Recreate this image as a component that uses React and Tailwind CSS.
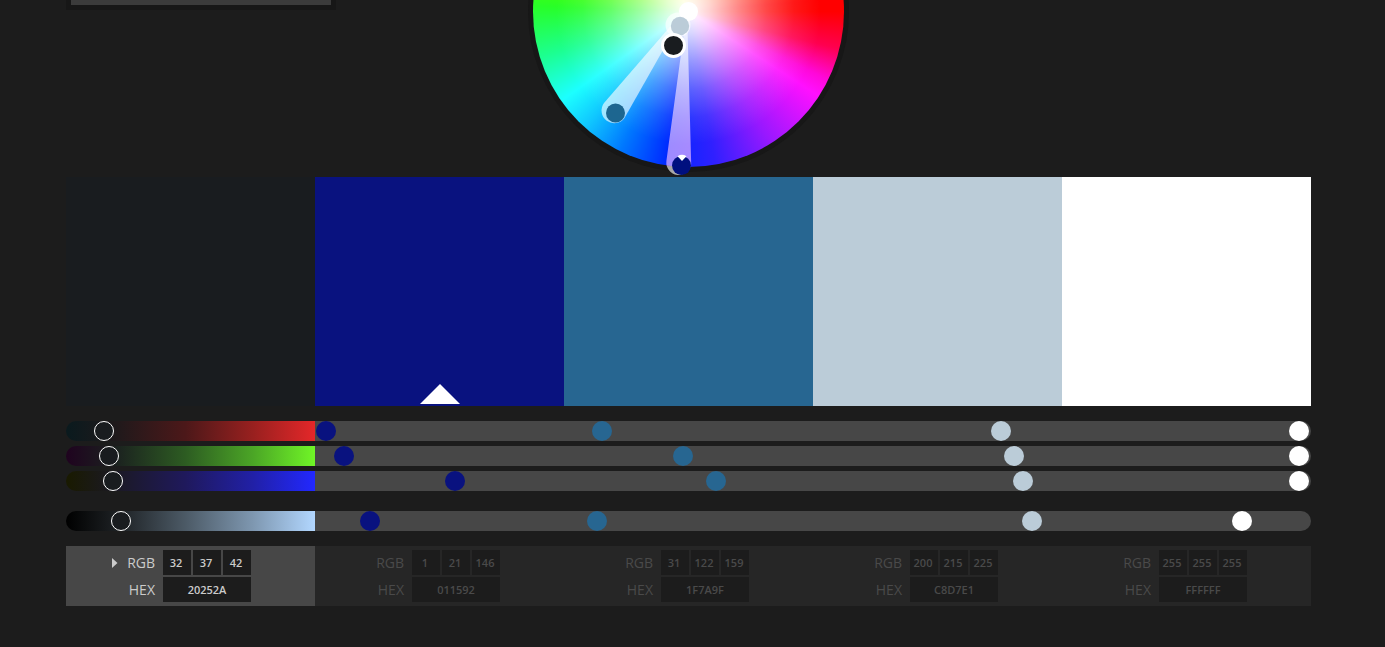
import React, { useState } from "react";

const COLORS = [
  { name: "Color 1", swatch: "bg-[#191c1f]", thumb: "[&::-webkit-slider-thumb]:bg-[#191c1f]", rgb: [32, 37, 42], level: 51, hex: "20252A" },
  { name: "Color 2", swatch: "bg-[#09127f]", thumb: "[&::-webkit-slider-thumb]:bg-[#09127f]", rgb: [1, 21, 146], level: 51, hex: "011592" },
  { name: "Color 3", swatch: "bg-[#276691]", thumb: "[&::-webkit-slider-thumb]:bg-[#276691]", rgb: [31, 122, 159], level: 26, hex: "1F7A9F" },
  { name: "Color 4", swatch: "bg-[#bbccd8]", thumb: "[&::-webkit-slider-thumb]:bg-[#bbccd8]", rgb: [200, 215, 225], level: 235, hex: "C8D7E1" },
  { name: "Color 5", swatch: "bg-white", thumb: "[&::-webkit-slider-thumb]:bg-white", rgb: [255, 255, 255], level: 191, hex: "FFFFFF" },
];

const CHANNELS = [
  { name: "Red", track: "bg-[linear-gradient(to_right,#0a1a1e,#1f191b_20%,#4c1819_48%,#98201f_75%,#e42729)]" },
  { name: "Green", track: "bg-[linear-gradient(to_right,#1f031f,#1b211f_20%,#2d5c22_48%,#4ba526_75%,#70f527)]" },
  { name: "Blue", track: "bg-[linear-gradient(to_right,#191a00,#1b1924_20%,#1f195c_48%,#2120a6_75%,#2228ff)]" },
  { name: "Brightness", track: "bg-[linear-gradient(to_right,#000,#1f2326_22%,#4c5a66_48%,#7e97b0_75%,#b2d7ff)]" },
];

function Slider({ color, channel, value, active }) {
  const [level, setLevel] = useState(value);
  return (
    <div className={`h-5 min-w-0 flex-1 pr-0.5 ${active ? channel.track : "bg-[#474747]"}`}>
      <input
        type="range"
        min="0"
        max="255"
        value={level}
        onChange={(e) => setLevel(Number(e.target.value))}
        aria-label={`${color.name} ${channel.name}`}
        className={`block h-5 w-full cursor-pointer appearance-none bg-transparent outline-none [&::-webkit-slider-thumb]:size-5 [&::-webkit-slider-thumb]:appearance-none [&::-webkit-slider-thumb]:rounded-full ${color.thumb} ${
          active ? "[&::-webkit-slider-thumb]:border [&::-webkit-slider-thumb]:border-solid [&::-webkit-slider-thumb]:border-white" : ""
        }`}
      />
    </div>
  );
}

function SliderRow({ channel, index }) {
  return (
    <div className="flex overflow-hidden rounded-full">
      {COLORS.map((color, i) => (
        <Slider key={color.name} color={color} channel={channel} value={index < 3 ? color.rgb[index] : color.level} active={i === 0} />
      ))}
    </div>
  );
}

function Wheel() {
  return (
    <div className="relative size-[321px] shrink-0 rounded-full border-5 border-[#171717]">
      <div className="size-full rounded-full bg-[radial-gradient(circle_closest-side,#fff_0%,#ffffffd0_14%,#ffffff88_32%,#ffffff48_50%,#ffffff18_68%,#ffffff00_85%),conic-gradient(from_90deg,#ff0000_0deg,#ff0050_14deg,#ff08d8_26deg,#ff10ff_33deg,#9818ff_58deg,#3020ff_80deg,#0028ff_98deg,#0078ff_116deg,#10c8ff_132deg,#1cffff_145deg,#1cff90_163deg,#28ff28_182deg,#50ff00_194deg,#ffff00_245deg,#ff8800_300deg,#ff0000_355deg)]" />
      <svg viewBox="528 -149 321 321" className="absolute -top-[5px] -left-[5px] size-[321px] overflow-visible" aria-hidden="true">
        <defs>
          <linearGradient id="beam" gradientUnits="userSpaceOnUse" x1="0" y1="60" x2="0" y2="176">
            <stop offset="0" stopColor="#fff" />
            <stop offset="0.75" stopColor="#ffc8ff" />
            <stop offset="0.91" stopColor="#ffc8ff" />
            <stop offset="0.92" stopColor="#fff" />
          </linearGradient>
        </defs>
        <g fill="#fff" fillOpacity="0.62">
          <path d="M688 6L604 103A12.700 12.700 0 1 0 624.500 118Z" />
          <path fill="url(#beam)" d="M687 10L666.400 161A12.300 12.300 0 1 0 691.200 164Z" />
          <circle cx="678" cy="25" r="12.500" />
        </g>
        <circle cx="688.500" cy="11.500" r="9.500" fill="#fff" />
        <circle cx="680" cy="26" r="9.200" fill="#bbccd8" />
        <circle cx="615.500" cy="113" r="9.500" fill="#1d6690" />
        <circle cx="681.500" cy="165.500" r="9.500" fill="#00107f" />
        <path d="M677.500 156.200Q682 153.500 686.500 156.200L682 161Z" fill="#fff" />
        <circle cx="673.500" cy="45.500" r="11" fill="#191c1f" stroke="#fff" strokeWidth="3" />
      </svg>
    </div>
  );
}

function Values({ color, active }) {
  const tone = active ? "text-[#cbcbcb]" : "text-[#4a4a4a]";
  const field = `h-[25px] bg-[#1c1c1c] text-center text-[11px] font-semibold outline-none ${tone}`;
  const id = color.name.replace(" ", "-").toLowerCase();
  return (
    <div className={`flex min-w-0 flex-1 flex-col gap-0.5 py-1 ${active ? "bg-[#474747]" : "bg-[#262626]"}`}>
      <div className="flex items-center">
        <div className="flex w-[97px] items-center justify-end gap-[9px] pr-2">
          {active && (
            <button type="button" aria-label="Color mode options">
              <svg viewBox="0 0 6 10" className="h-2.5 w-1.5 fill-[#cbcbcb]">
                <path d="M0 0L5.500 5L0 10Z" />
              </svg>
            </button>
          )}
          <label htmlFor={`${id}-r`} className={`text-sm font-medium ${tone}`}>RGB</label>
        </div>
        <div className="flex gap-0.5">
          {color.rgb.map((v, i) => (
            <input key={i} id={`${id}-${"rgb"[i]}`} aria-label={`${color.name} ${CHANNELS[i].name}`} defaultValue={v} className={`w-7 pr-0.5 ${field}`} />
          ))}
        </div>
      </div>
      <div className="flex items-center">
        <label htmlFor={`${id}-hex`} className={`w-[97px] pr-2 text-right text-sm font-medium ${tone}`}>HEX</label>
        <input id={`${id}-hex`} defaultValue={color.hex} className={`w-[88px] ${field}`} />
      </div>
    </div>
  );
}

export default function App() {
  return (
    <main className="min-h-screen bg-[#1c1c1c] pr-[74px] pb-10 pl-[66px] font-['Open_Sans','Noto_Sans',sans-serif]">
      <header className="grid h-[177px] grid-cols-[1fr_auto_1fr]">
        <div className="h-2.5 w-[270px] border-x-5 border-b-5 border-[#171717] bg-[#3b3b3b]" />
        <div className="flex h-[172px] items-end">
          <Wheel />
        </div>
      </header>
      <section className="relative flex h-[229px]" aria-label="Palette">
        {COLORS.map((color, i) => (
          <button key={color.name} type="button" aria-label={color.name} className={`flex flex-1 items-end justify-center pb-0.5 ${color.swatch}`}>
            {i === 1 && (
              <svg viewBox="0 0 40 20" className="h-5 w-10 fill-white">
                <path d="M20 0L40 20H0Z" />
              </svg>
            )}
          </button>
        ))}
      </section>
      <section className="flex flex-col gap-5 py-[15px]" aria-label="Color sliders">
        <div className="flex flex-col gap-[5px]">
          {CHANNELS.slice(0, 3).map((channel, i) => (
            <SliderRow key={channel.name} channel={channel} index={i} />
          ))}
        </div>
        <SliderRow channel={CHANNELS[3]} index={3} />
      </section>
      <section className="flex" aria-label="Color values">
        {COLORS.map((color, i) => (
          <Values key={color.name} color={color} active={i === 0} />
        ))}
      </section>
    </main>
  );
}
